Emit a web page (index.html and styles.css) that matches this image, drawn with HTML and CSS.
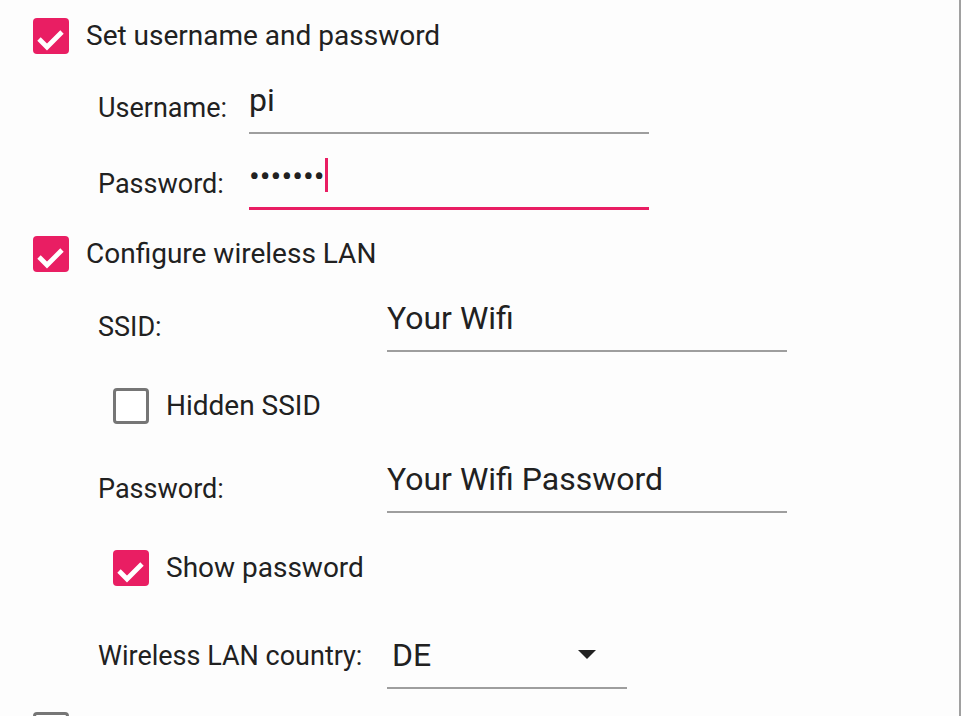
FILE: index.html
```html
<!DOCTYPE html>
<html lang="en">
<head>
<meta charset="utf-8">
<title>Advanced options</title>
<link rel="stylesheet" href="styles.css">
</head>
<body>
<div class="page">
  <main class="panel">
    <div class="check-row first">
      <span class="cb on"><svg viewBox="0 0 36 36" width="36" height="36"><polyline points="6,21 14,29 29,14" fill="none" stroke="#fff" stroke-width="4.8"/></svg></span>
      <span class="cb-label">Set username and password</span>
    </div>

    <div class="field-row user-row">
      <span class="label col-short">Username:</span>
      <div class="input w400"><span class="value">pi</span></div>
    </div>

    <div class="field-row pass-row">
      <span class="label col-short">Password:</span>
      <div class="input w400 focused"><span class="value dots">•••••••</span><span class="caret"></span></div>
    </div>

    <div class="check-row wlan-row">
      <span class="cb on"><svg viewBox="0 0 36 36" width="36" height="36"><polyline points="6,21 14,29 29,14" fill="none" stroke="#fff" stroke-width="4.8"/></svg></span>
      <span class="cb-label">Configure wireless LAN</span>
    </div>

    <div class="field-row ssid-row">
      <span class="label col-long">SSID:</span>
      <div class="input w400"><span class="value">Your Wifi</span></div>
    </div>

    <div class="check-row sub hidden-row">
      <span class="cb off"></span>
      <span class="cb-label">Hidden SSID</span>
    </div>

    <div class="field-row wpass-row">
      <span class="label col-long">Password:</span>
      <div class="input w400"><span class="value">Your Wifi Password</span></div>
    </div>

    <div class="check-row sub show-row">
      <span class="cb on"><svg viewBox="0 0 36 36" width="36" height="36"><polyline points="6,21 14,29 29,14" fill="none" stroke="#fff" stroke-width="4.8"/></svg></span>
      <span class="cb-label">Show password</span>
    </div>

    <div class="field-row country-row">
      <span class="label col-long country-label">Wireless LAN country:</span>
      <div class="input select w240"><span class="value de">DE</span><span class="arrow"></span></div>
    </div>

    <div class="check-row next-row">
      <span class="cb off"></span>
    </div>
  </main>
  <div class="outside"></div>
</div>
</body>
</html>
```

FILE: styles.css
```css
html, body {
  margin: 0;
  padding: 0;
  background: #ffffff;
}

body {
  font-family: Roboto, "Noto Sans", "Liberation Sans", sans-serif;
  color: #212121;
}

.page {
  display: flex;
  height: 716px;
  overflow: hidden;
}

.panel {
  width: 961px;
  flex: none;
  height: 716px;
  overflow: hidden;
  background: #fdfdfd;
  border-right: 2px solid #a0a0a0;
  padding: 18px 0 0 33px;
  box-sizing: border-box;
}

.outside {
  flex: 1;
  background: #ffffff;
}

.check-row {
  display: flex;
  align-items: center;
  height: 36px;
  gap: 17px;
}

.check-row.sub {
  padding-left: 80px;
}

.cb {
  width: 36px;
  height: 36px;
  box-sizing: border-box;
  border-radius: 4px;
  flex: none;
  display: block;
}

.cb svg {
  display: block;
}

.cb.on {
  background: #e91e63;
}

.cb.off {
  border: 3px solid #767676;
  background: #fff;
}

.cb-label {
  font-size: 28px;
  line-height: 32px;
  white-space: nowrap;
}

.field-row {
  display: flex;
  align-items: center;
  padding-left: 65px;
  box-sizing: border-box;
}

.label {
  font-size: 27px;
  line-height: 32px;
  white-space: nowrap;
  flex: none;
  margin-top: 4px;
}

.country-label {
  margin-top: 0;
  margin-bottom: 12px;
}

.col-short { width: 151px; }
.col-long { width: 289px; }

.input {
  display: flex;
  align-items: flex-end;
  align-self: stretch;
  box-sizing: border-box;
  border-bottom: 2px solid #9e9e9e;
  padding-bottom: 13px;
}

.input.focused {
  border-bottom: 3px solid #e91e63;
  padding-bottom: 12px;
}

.w400 { width: 400px; }
.w240 { width: 240px; }

.value {
  font-size: 32px;
  line-height: normal;
  white-space: nowrap;
}

.caret {
  width: 3px;
  height: 34px;
  background: #e91e63;
  margin: 0 0 3px 0;
}

.select {
  justify-content: space-between;
  padding-left: 5px;
  padding-right: 31px;
}

.arrow {
  width: 0;
  height: 0;
  border-left: 9px solid transparent;
  border-right: 9px solid transparent;
  border-top: 9px solid #212121;
  margin-bottom: 15px;
}

.user-row { margin-top: 24px; height: 56px; }
.pass-row { margin-top: 20px; height: 56px; }
.wlan-row { margin-top: 26px; }
.ssid-row { margin-top: 26px; height: 54px; }
.hidden-row { margin-top: 36px; }
.wpass-row { margin-top: 36px; height: 53px; }
.show-row { margin-top: 37px; }
.country-row { margin-top: 48px; height: 55px; }
.next-row { margin-top: 23px; align-items: flex-start; }
```
